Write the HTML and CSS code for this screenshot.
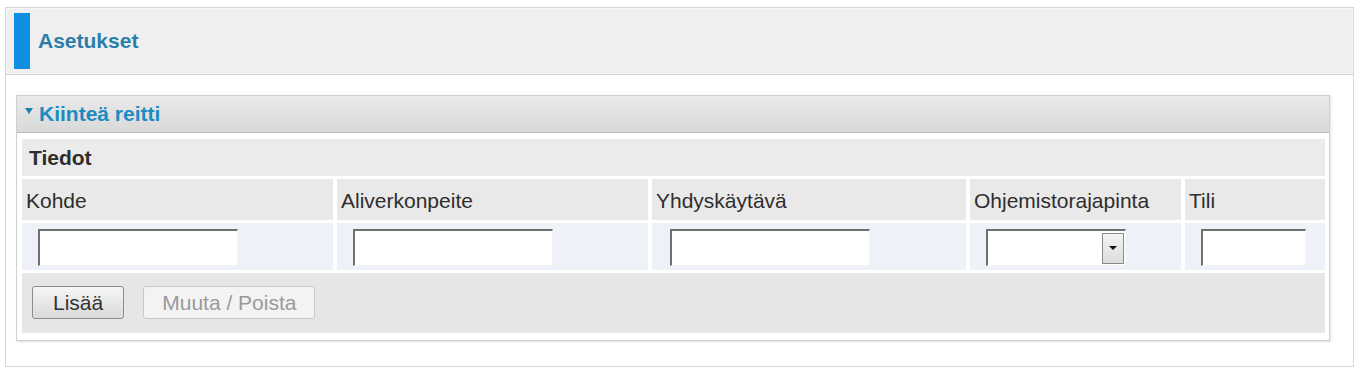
FILE: index.html
```html
<!DOCTYPE html>
<html lang="fi">
<head>
    <meta charset="UTF-8">
    <title>Asetukset</title>
    <link rel="stylesheet" href="styles.css">
</head>
<body>
    <div class="frame">
        <div class="page-head">
            <span class="head-bar"></span>
            <h1>Asetukset</h1>
        </div>
        <div class="content">
            <div class="panel">
                <div class="panel-title">
                    <span class="caret"></span>
                    <span>Kiinteä reitti</span>
                </div>
                <div class="panel-body">
                    <div class="route-grid">
                        <div class="cell section">Tiedot</div>

                        <div class="cell label">Kohde</div>
                        <div class="cell label">Aliverkonpeite</div>
                        <div class="cell label">Yhdyskäytävä</div>
                        <div class="cell label">Ohjemistorajapinta</div>
                        <div class="cell label">Tili</div>

                        <div class="cell field"><input type="text" class="text-input"></div>
                        <div class="cell field"><input type="text" class="text-input"></div>
                        <div class="cell field wide"><input type="text" class="text-input"></div>
                        <div class="cell field">
                            <div class="select-box">
                                <select></select>
                                <span class="dd-btn"><span class="dd-arrow"></span></span>
                            </div>
                        </div>
                        <div class="cell field"><input type="text" class="text-input short"></div>

                        <div class="cell actions">
                            <button class="btn">Lisää</button>
                            <button class="btn disabled" disabled>Muuta / Poista</button>
                        </div>
                    </div>
                </div>
            </div>
        </div>
    </div>
</body>
</html>
```

FILE: styles.css
```css
body {
    margin: 0;
    background-color: #fff;
    font-family: "Liberation Sans", Arial, sans-serif;
    font-size: 21px;
    color: #2e2e2e;
}
.frame {
    box-sizing: border-box;
    width: 1349px;
    height: 360px;
    margin: 7px 0 0 5px;
    border: 1px solid #d6d6d6;
}
.page-head {
    display: flex;
    align-items: center;
    height: 66px;
    background-color: #efefef;
    border-bottom: 1px solid #d2d2d2;
    box-shadow: inset 0 0 0 1px #f7f7f7;
}
.head-bar {
    width: 16px;
    height: 56px;
    margin-left: 8px;
    background-color: #0f8fe0;
}
.page-head h1 {
    margin: 0 0 0 8px;
    font-size: 21px;
    font-weight: bold;
    color: #2a7fa9;
}
.content {
    padding: 20px 0 0 10px;
}
.panel {
    width: 1314px;
    box-sizing: border-box;
    border: 1px solid #d0d0d0;
    box-shadow: 1px 1px 2px rgba(0, 0, 0, 0.12);
    background-color: #fff;
}
.panel-title {
    display: flex;
    align-items: center;
    height: 36px;
    padding-left: 8px;
    background: linear-gradient(#e9e9e9, #d9d9d9);
    border-bottom: 1px solid #bdbdbd;
    font-weight: bold;
    color: #1b8cc2;
}
.caret {
    width: 0;
    height: 0;
    margin-right: 6px;
    margin-top: -6px;
    border-left: 4px solid transparent;
    border-right: 4px solid transparent;
    border-top: 6px solid #1b7fb2;
}
.panel-body {
    padding: 6px 4px 7px 5px;
}
.route-grid {
    display: grid;
    grid-template-columns: 311px 311px 314px 211px 1fr;
    grid-template-rows: 37px 41px 47px 60px;
    column-gap: 4px;
    row-gap: 3px;
}
.cell {
    display: flex;
    align-items: center;
    padding-left: 4px;
}
.section {
    grid-column: 1 / -1;
    padding-left: 7px;
    background-color: #ebebeb;
    font-weight: bold;
}
.label {
    padding-top: 3px;
    background-color: #e9e9e9;
}
.field {
    padding-left: 16px;
    padding-top: 2px;
    background-color: #eef2f8;
}
.field.wide {
    padding-left: 18px;
}
.text-input {
    box-sizing: border-box;
    width: 200px;
    height: 37px;
    border-top: 2px solid #6f6f6f;
    border-left: 2px solid #6f6f6f;
    border-right: 1px solid #f4f4f4;
    border-bottom: 1px solid #f4f4f4;
    background-color: #fff;
    outline: none;
    font: inherit;
}
.text-input.short {
    width: 105px;
}
.select-box {
    box-sizing: border-box;
    display: flex;
    align-items: center;
    width: 140px;
    height: 37px;
    border-top: 2px solid #6f6f6f;
    border-left: 2px solid #6f6f6f;
    border-right: 1px solid #f4f4f4;
    border-bottom: 1px solid #f4f4f4;
    background-color: #fff;
}
.select-box select {
    flex: 1;
    min-width: 0;
    height: 100%;
    border: none;
    background: transparent;
    appearance: none;
    -webkit-appearance: none;
    outline: none;
}
.dd-btn {
    box-sizing: border-box;
    display: flex;
    align-items: center;
    justify-content: center;
    width: 22px;
    height: 31px;
    margin-right: 1px;
    border: 1px solid #8a8a8a;
    background: linear-gradient(#f4f4f4, #dcdcdc);
}
.dd-arrow {
    width: 0;
    height: 0;
    border-left: 4px solid transparent;
    border-right: 4px solid transparent;
    border-top: 4px solid #111;
}
.actions {
    grid-column: 1 / -1;
    align-items: flex-start;
    gap: 19px;
    padding: 13px 0 0 10px;
    background-color: #e6e6e6;
}
.btn {
    height: 33px;
    padding: 0 20px;
    border: 1px solid #8c8c8c;
    border-radius: 3px;
    background: linear-gradient(#f6f6f6, #d9d9d9);
    font: inherit;
    color: #333;
}
.btn.disabled {
    border-color: #c9c9c9;
    background: #f3f3f3;
    color: #9a9a9a;
    padding: 0 18px;
}
```
